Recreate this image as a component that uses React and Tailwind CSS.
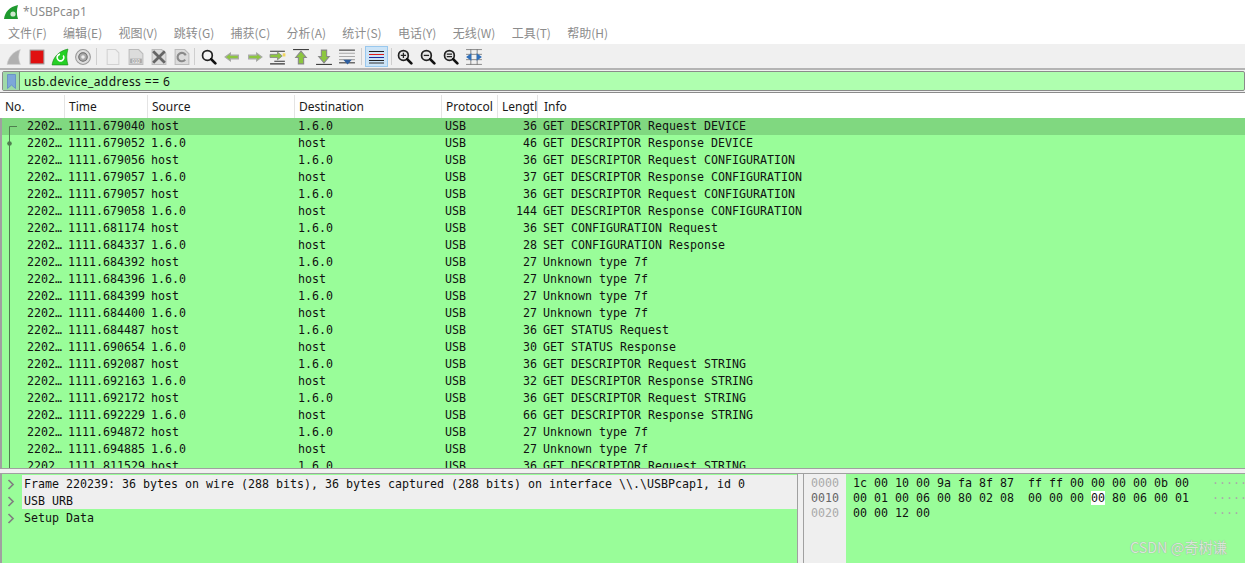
import React from 'react';

const menus = ['文件(F)', '编辑(E)', '视图(V)', '跳转(G)', '捕获(C)', '分析(A)', '统计(S)', '电话(Y)', '无线(W)', '工具(T)', '帮助(H)'];

const columns = [
  { label: 'No.', w: 'w-[65px]', pad: 'pl-[5px]' },
  { label: 'Time', w: 'w-[83px]', pad: 'pl-[4px]' },
  { label: 'Source', w: 'w-[147px]', pad: 'pl-[4px]' },
  { label: 'Destination', w: 'w-[147px]', pad: 'pl-[4px]' },
  { label: 'Protocol', w: 'w-[56px]', pad: 'pl-[4px]' },
  { label: 'Lengtl', w: 'w-[40px]', pad: 'pl-[4px]' },
  { label: 'Info', w: 'flex-1', pad: 'pl-[6px]' },
];

const packets = [
  ['1111.679040', 'host', '1.6.0', '36', 'GET DESCRIPTOR Request DEVICE'],
  ['1111.679052', '1.6.0', 'host', '46', 'GET DESCRIPTOR Response DEVICE'],
  ['1111.679056', 'host', '1.6.0', '36', 'GET DESCRIPTOR Request CONFIGURATION'],
  ['1111.679057', '1.6.0', 'host', '37', 'GET DESCRIPTOR Response CONFIGURATION'],
  ['1111.679057', 'host', '1.6.0', '36', 'GET DESCRIPTOR Request CONFIGURATION'],
  ['1111.679058', '1.6.0', 'host', '144', 'GET DESCRIPTOR Response CONFIGURATION'],
  ['1111.681174', 'host', '1.6.0', '36', 'SET CONFIGURATION Request'],
  ['1111.684337', '1.6.0', 'host', '28', 'SET CONFIGURATION Response'],
  ['1111.684392', 'host', '1.6.0', '27', 'Unknown type 7f'],
  ['1111.684396', '1.6.0', 'host', '27', 'Unknown type 7f'],
  ['1111.684399', 'host', '1.6.0', '27', 'Unknown type 7f'],
  ['1111.684400', '1.6.0', 'host', '27', 'Unknown type 7f'],
  ['1111.684487', 'host', '1.6.0', '36', 'GET STATUS Request'],
  ['1111.690654', '1.6.0', 'host', '30', 'GET STATUS Response'],
  ['1111.692087', 'host', '1.6.0', '36', 'GET DESCRIPTOR Request STRING'],
  ['1111.692163', '1.6.0', 'host', '32', 'GET DESCRIPTOR Response STRING'],
  ['1111.692172', 'host', '1.6.0', '36', 'GET DESCRIPTOR Request STRING'],
  ['1111.692229', '1.6.0', 'host', '66', 'GET DESCRIPTOR Response STRING'],
  ['1111.694872', 'host', '1.6.0', '27', 'Unknown type 7f'],
  ['1111.694885', '1.6.0', 'host', '27', 'Unknown type 7f'],
  ['1111.811529', 'host', '1.6.0', '36', 'GET DESCRIPTOR Request STRING'],
];

const details = [
  ['Frame 220239: 36 bytes on wire (288 bits), 36 bytes captured (288 bits) on interface \\\\.\\USBPcap1, id 0', true],
  ['USB URB', true],
  ['Setup Data', false],
];

const hexRows = [
  { off: '0000', a: '1c 00 10 00 9a fa 8f 87', b: ['ff ff 00 00 00 00 0b 00'], dots: '········', dim: true },
  { off: '0010', a: '00 01 00 06 00 80 02 08', b: ['00 00 00 ', '00', ' 80 06 00 01'], dots: '········', dim: false },
  { off: '0020', a: '00 00 12 00', b: [''], dots: '····', dim: true },
];

const mono = 'font-["DejaVu_Sans_Mono",monospace] text-[11.63px] text-[#111]';

// every toolbar button sits in a 23px slot
function Icon({ children }) {
  return (
    <div className="w-[23px] h-[17px] flex justify-center shrink-0">
      <svg width="18" height="18" viewBox="0 0 17 17" className="shrink-0">
        {children}
      </svg>
    </div>
  );
}

function Sep({ className }) {
  return <div className={`w-px h-[17px] bg-[#cfcfcf] shrink-0 ${className}`} />;
}

function Lens({ mark }) {
  return (
    <Icon>
      <circle cx="7" cy="7" r="4.6" fill={mark ? '#e8e8e8' : '#f4f4f4'} stroke="#222" strokeWidth="1.600" />
      <path d="M10.500 10.500 14.500 14.500" stroke="#111" strokeWidth="2.600" strokeLinecap="round" />
      {mark === 'plus' && <path d="M4.500 7h5M7 4.500v5" stroke="#222" strokeWidth="1.200" />}
      {mark === 'minus' && <path d="M4.500 7h5" stroke="#222" strokeWidth="1.200" />}
      {mark === 'equal' && <path d="M4.500 5.800h5M4.500 8.200h5" stroke="#222" strokeWidth="1.100" />}
    </Icon>
  );
}

function Arrow({ dir }) {
  const d = dir === 'left' ? 'M2 8.500 7 4.800v2h7.500v3.400H7v2z' : 'M15 8.500 10 4.800v2H2.500v3.400H10v2z';
  return (
    <Icon>
      <path d={d} fill="#8cc63f" stroke="#a8a8a8" strokeWidth="1.100" />
    </Icon>
  );
}

function Toolbar() {
  return (
    <div className="h-[26px] bg-[#f0f0f0] border-b-2 border-[#b4b4b4] flex items-center pl-[2px] shrink-0">
      <Icon>
        <path d="M2 15.500C3 9 7.500 3.500 14.500 1.500c-2 4.500-2 9.500 0 14z" fill="#b0b0b0" stroke="#cfcfcf" strokeWidth="0.600" />
      </Icon>
      <Icon>
        <rect x="2" y="2" width="13" height="13" fill="#e01010" stroke="#999" />
      </Icon>
      <Icon>
        <path d="M1 16C2 9 7 3 16 1c-1.500 5-1.500 10 0 15z" fill="#25d025" stroke="#1a8a1a" strokeWidth="0.600" />
        <path d="M11.500 7a3.200 3.200 0 1 1-3-1.200" fill="none" stroke="#fff" strokeWidth="1.500" />
      </Icon>
      <Icon>
        <circle cx="8.500" cy="8.500" r="7" fill="#ddd" stroke="#999" />
        <circle cx="8.500" cy="8.500" r="4" fill="#aaa" stroke="#666" />
        <circle cx="8.500" cy="8.500" r="1.700" fill="#eee" />
      </Icon>
      <Sep className="ml-[2px] mr-[4px]" />
      <Icon>
        <path d="M3 1.500h8l3 3v11H3z" fill="#efefef" stroke="#d2d2d2" />
      </Icon>
      <Icon>
        <path d="M2 1.500h9l4 4v10H2z" fill="#dcdcdc" stroke="#bbb" />
        <rect x="3" y="10" width="11" height="4.500" fill="#a8a8a8" />
        <text x="8.500" y="14" fontSize="4.500" textAnchor="middle" fill="#fff" fontFamily="Liberation Sans, sans-serif">010</text>
      </Icon>
      <Icon>
        <path d="M2 1.500h9l4 4v10H2z" fill="#dcdcdc" stroke="#bbb" />
        <path d="M3 3l11 11M14 3 3 14" stroke="#666" strokeWidth="2.600" />
      </Icon>
      <Icon>
        <path d="M2 1.500h9l4 4v10H2z" fill="#dcdcdc" stroke="#bbb" />
        <path d="M12 7a4 4 0 1 0-.5 4" fill="none" stroke="#8a8a8a" strokeWidth="2" />
      </Icon>
      <Sep className="ml-[1px] mr-[2px]" />
      <Lens />
      <Arrow dir="left" />
      <Arrow dir="right" />
      <Icon>
        <path d="M1 3h14M5 12.500h10M1 15h14" stroke="#333" strokeWidth="1" />
        <path d="M1 6h7V3.800l4.500 3.700L8 11.200V9H1z" fill="#8cc63f" stroke="#888" strokeWidth="0.800" />
        <rect x="13" y="5" width="2.500" height="3" fill="#f3d660" />
      </Icon>
      <Icon>
        <path d="M1 1.500h15" stroke="#333" strokeWidth="1" />
        <path d="M8.500 3 13.500 9H11v6H6V9H3.500z" fill="#8cc63f" stroke="#888" />
      </Icon>
      <Icon>
        <path d="M1 15.500h15" stroke="#333" strokeWidth="1" />
        <path d="M8.500 14 3.500 8H6V2h5v6h2.500z" fill="#8cc63f" stroke="#888" />
      </Icon>
      <Icon>
        <path d="M1 2h15" stroke="#333" />
        <path d="M1 5h15M1 8h15M1 11h15" stroke="#a8a8a8" />
        <path d="M1 14h15" stroke="#333" />
        <path d="M5 11h8l-4 4.500z" fill="#2f5f9f" />
      </Icon>
      <Sep className="ml-[3px] mr-[3px]" />
      <div className="w-[23px] h-[21px] bg-[#cce4f7] border border-[#99c8ee] flex items-center justify-center shrink-0">
        <svg width="15" height="15" viewBox="0 0 15 15">
          <path d="M0 2.500h15M0 11.500h15" stroke="#222" />
          <path d="M0 5.500h15" stroke="#e01c1c" />
          <path d="M0 8.500h15" stroke="#1c2c9c" />
          <path d="M0 14h15" stroke="#333" />
        </svg>
      </div>
      <Sep className="ml-[3px] mr-[1px]" />
      <Lens mark="plus" />
      <Lens mark="minus" />
      <Lens mark="equal" />
      <Icon>
        <path d="M1 1.500h15M1 6h15M1 11h15M1 15.500h15M5.500 1v15M11.500 1v15" stroke="#777" strokeWidth="0.800" />
        <path d="M1 8.500 6 5v7zM16 8.500 11 5v7z" fill="#2f6fb9" />
      </Icon>
    </div>
  );
}

function TreeMark({ index }) {
  return (
    <svg width="20" height="17" viewBox="0 0 20 17" className="shrink-0">
      {index === 0 ? (
        <path d="M15 8.500H7.500V17" fill="none" stroke="#4f7f4f" />
      ) : (
        <path d="M7.500 0V17" stroke="#4f7f4f" />
      )}
      {index === 1 && <circle cx="7.500" cy="8.500" r="2.300" fill="#4f7f4f" />}
    </svg>
  );
}

export default function App() {
  return (
    <div className="w-[1245px] h-[563px] overflow-hidden bg-white flex flex-col relative">
      <div className="h-[22px] flex items-center pl-[3px] gap-[4px] pt-[2px] shrink-0">
        <svg width="16" height="16" viewBox="0 0 16 16">
          <path d="M1 15C2 8 6 3 15 1c-1.500 5-1.500 10 0 14z" fill="#1f9a2f" />
          <circle cx="10" cy="10" r="2.600" fill="#cfe8cf" />
        </svg>
        <span className="font-['Noto_Sans',sans-serif] text-[12px] text-[#8a8a8a]">*USBPcap1</span>
      </div>

      <div className="h-[22px] flex items-center pl-[8px] gap-[16.300px] shrink-0 font-['Noto_Sans_CJK_SC','Noto_Sans',sans-serif] text-[12px] text-[#8c8c8c]">
        {menus.map((m) => (
          <span key={m}>{m}</span>
        ))}
      </div>

      <Toolbar />

      <div className="h-[22px] bg-[#f0f0f0] shrink-0 pl-[2px] pt-[1px]">
        <div className="h-[20px] bg-[#afffaf] border border-[#8a8a8a] rounded-[2px] flex items-center">
          <div className="w-[17px] h-full flex items-center justify-center border-r border-[#6f8f6f] bg-[#9fd9a8]">
            <svg width="9" height="15" viewBox="0 0 9 15">
              <path d="M0.500 0.500h8v14L4.500 11 0.500 14.500z" fill="#7da7d9" stroke="#6a94c6" />
            </svg>
          </div>
          <span className="font-['Noto_Sans',sans-serif] text-[12px] text-[#111] pl-[4px] pt-[2px] tracking-[0.45px]">usb.device_address == 6</span>
        </div>
      </div>

      <div className="h-[3px] bg-white border-t border-[#8a8a8a] shrink-0" />

      <div className="h-[23px] flex shrink-0 bg-white font-['Noto_Sans',sans-serif] text-[12px] text-[#1a1a1a]">
        {columns.map((c) => (
          <div key={c.label} className={`${c.w} ${c.pad} flex items-center overflow-hidden whitespace-nowrap border-r border-[#e4e4e4] last:border-r-0`}>
            {c.label}
          </div>
        ))}
      </div>

      <div className={`h-[350px] overflow-hidden shrink-0 bg-[#99fd99] border-l-2 border-[#a0a0a0] ${mono}`}>
        {packets.map((p, i) => (
          <div key={i} className={`h-[17px] leading-[17px] flex whitespace-nowrap ${i === 0 ? 'bg-[#80d880]' : ''}`}>
            <div className="w-[63px] flex">
              <TreeMark index={i} />
              <span className="ml-[5px]">2202…</span>
            </div>
            <div className="w-[83px] pl-[3px]">{p[0]}</div>
            <div className="w-[147px] pl-[3px]">{p[1]}</div>
            <div className="w-[147px] pl-[3px]">{p[2]}</div>
            <div className="w-[56px] pl-[3px]">USB</div>
            <div className="w-[40px] text-right pr-px">{p[3]}</div>
            <div className="flex-1 pl-[5px]">{p[4]}</div>
          </div>
        ))}
      </div>

      <div className="h-[6px] bg-[#f0f0f0] border-t border-b border-[#a0a0a0] shrink-0" />

      <div className={`flex-1 min-h-0 flex ${mono}`}>
        <div className="w-[798px] bg-[#99fd99] border-l-2 border-r border-[#a0a0a0] shrink-0 overflow-hidden pt-px">
          {details.map(([text, shaded]) => (
            <div key={text} className="h-[17px] leading-[19px] flex whitespace-nowrap">
              <svg width="20" height="17" viewBox="0 0 20 17" className="shrink-0">
                <path d="M6.500 5 11 9.500 6.500 14" fill="none" stroke="#808080" strokeWidth="1.700" />
              </svg>
              <div className={`flex-1 pl-[2px] ${shaded ? 'bg-[#efefef]' : ''}`}>{text}</div>
            </div>
          ))}
        </div>

        <div className="w-[5px] bg-[#f0f0f0] shrink-0" />

        <div className="flex-1 flex min-w-0 border-l border-[#a0a0a0] overflow-hidden">
          <div className="w-[42px] bg-[#efefef] shrink-0 pt-[2px] pl-[7px]">
            {hexRows.map((r) => (
              <div key={r.off} className={`h-[15px] leading-[15px] ${r.dim ? 'text-[#aaa]' : 'text-[#666]'}`}>{r.off}</div>
            ))}
          </div>
          <div className="flex-1 bg-[#99fd99] pt-[2px] pl-[7px]">
            {hexRows.map((r) => (
              <div key={r.off} className="h-[15px] leading-[15px] flex whitespace-pre">
                <span className="w-[175px]">{r.a}</span>
                <span className="w-[184px]">
                  {r.b.length === 3 ? (
                    <>
                      {r.b[0]}
                      <span className="bg-white">{r.b[1]}</span>
                      {r.b[2]}
                    </>
                  ) : (
                    r.b[0]
                  )}
                </span>
                <span className="text-[#aaa]">{r.dots}</span>
              </div>
            ))}
          </div>
        </div>
      </div>

      <span className="absolute left-[1130px] top-[536px] font-['Noto_Sans_CJK_SC','Liberation_Sans',sans-serif] text-[14.300px] text-[#d9e6d9] [text-shadow:0_0_1px_#909090] whitespace-nowrap">CSDN @奇树谦</span>
    </div>
  );
}
